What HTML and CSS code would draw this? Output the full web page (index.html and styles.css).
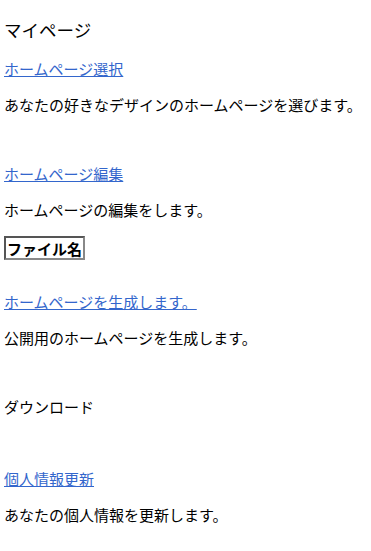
FILE: index.html
```html
<!DOCTYPE html>
<html lang="ja">
<head>
    <meta charset="UTF-8">
    <meta name="viewport" content="width=device-width, initial-scale=1.0">
    <title>マイページ</title>
    <link rel="stylesheet" href="styles.css">
</head>
<body>
    <h1 class="title">マイページ</h1>

    <div class="section">
        <a href="#">ホームページ選択</a>
        <p>あなたの好きなデザインのホームページを選びます。</p>
    </div>

    <div class="section section-edit">
        <a href="#">ホームページ編集</a>
        <p>ホームページの編集をします。</p>
        <button type="button" class="file-button">ファイル名</button>
    </div>

    <div class="section">
        <a href="#">ホームページを生成します。</a>
        <p>公開用のホームページを生成します。</p>
    </div>

    <p class="download">ダウンロード</p>

    <div class="section section-last">
        <a href="#">個人情報更新</a>
        <p>あなたの個人情報を更新します。</p>
    </div>
</body>
</html>
```

FILE: styles.css
```css
body {
    font-family: "Noto Sans CJK JP", "Liberation Sans", sans-serif;
    font-size: 15px;
    line-height: 18px;
    color: #000;
    background-color: #fff;
    margin: 0;
    padding: 21px 4px 0;
}
.title {
    font-size: 17.5px;
    font-weight: normal;
    line-height: 18px;
    margin: 0 0 21px;
}
a {
    color: #3366cc;
}
p {
    margin: 0;
}
.section {
    display: flex;
    flex-direction: column;
    align-items: flex-start;
    gap: 18px;
    margin-bottom: 51px;
}
.section-edit {
    margin-bottom: 33px;
}
.section-last {
    margin-bottom: 0;
}
.file-button {
    font-family: "Noto Sans CJK JP", sans-serif;
    font-size: 15px;
    font-weight: bold;
    line-height: 17px;
    height: 24px;
    padding: 0 1px;
    margin-top: -1px;
    background-color: #fff;
    color: #000;
    border: 2px solid #555;
    border-right-color: #888;
    border-bottom-color: #888;
    border-radius: 0;
}
.download {
    margin-bottom: 54px;
}
```
